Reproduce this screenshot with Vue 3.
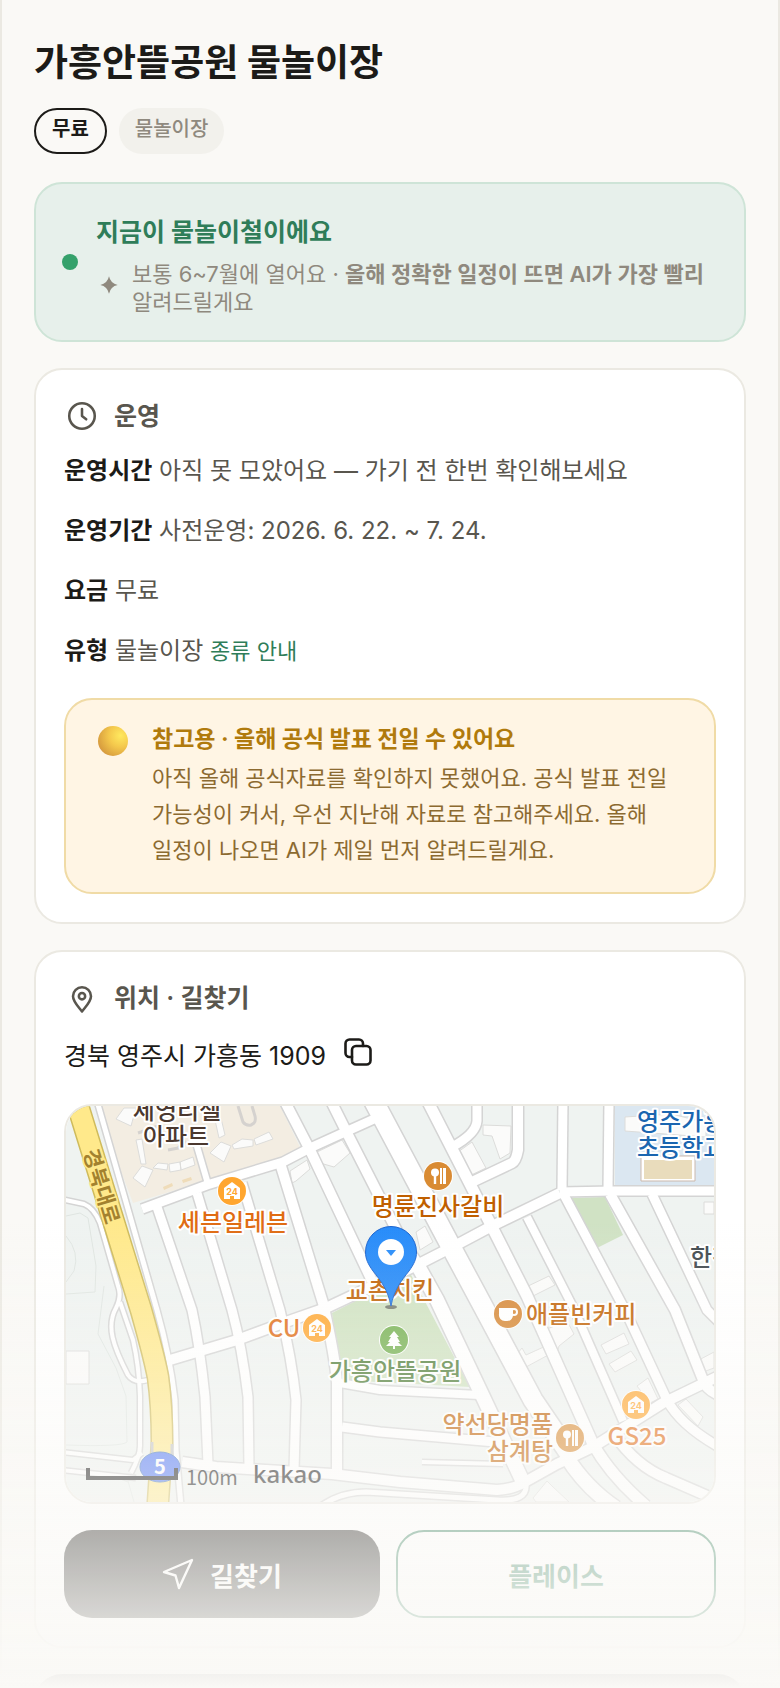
<template>
  <main class="page">
    <header class="place-header">
      <h1>{{ place.name }}</h1>
      <div class="chips">
        <span class="chip chip-free">{{ place.fee }}</span>
        <span class="chip">{{ place.type }}</span>
      </div>
    </header>

    <section class="season-banner">
      <span class="season-dot"></span>
      <div class="season-body">
        <h2>지금이 물놀이철이에요</h2>
        <div class="season-note">
          <svg class="spark-icon" viewBox="0 0 24 24" aria-hidden="true">
            <path d="M12 4Q13.400 10.600 20 12Q13.400 13.400 12 20Q10.600 13.400 4 12Q10.600 10.600 12 4Z" />
          </svg>
          <p>보통 6~7월에 열어요 · <strong>올해 정확한 일정이 뜨면 AI가 가장 빨리</strong> 알려드릴게요</p>
        </div>
      </div>
    </section>

    <section class="card">
      <div class="card-header">
        <svg class="card-icon" viewBox="0 0 24 24" aria-hidden="true">
          <circle cx="12" cy="12" r="8.5" />
          <path d="M12 7.4V12l2.8 2.2" />
        </svg>
        <h2>운영</h2>
      </div>
      <div class="info-rows">
        <p v-for="row in rows" :key="row.label">
          <strong>{{ row.label }}</strong> {{ row.value }}
          <a v-if="row.link" href="#types">{{ row.link }}</a>
        </p>
      </div>
      <div class="notice">
        <span class="notice-ball"></span>
        <div class="notice-body">
          <h3>참고용 · 올해 공식 발표 전일 수 있어요</h3>
          <p>아직 올해 공식자료를 확인하지 못했어요. 공식 발표 전일 가능성이 커서, 우선 지난해 자료로 참고해주세요. 올해 일정이 나오면 AI가 제일 먼저 알려드릴게요.</p>
        </div>
      </div>
    </section>

    <section class="card">
      <div class="card-header">
        <svg class="card-icon" viewBox="0 0 24 24" aria-hidden="true">
          <path d="M12 21C9.5 17.6 6 14.4 6 10.8a6 6 0 0 1 12 0C18 14.4 14.5 17.6 12 21Z" />
          <circle cx="12" cy="10.8" r="2.1" />
        </svg>
        <h2>위치 · 길찾기</h2>
      </div>
      <div class="address">
        <span>{{ place.address }}</span>
        <button class="copy-button" type="button" aria-label="주소 복사" @click="copyAddress">
          <svg viewBox="0 0 28 28" aria-hidden="true">
            <path d="M8 19H5.500a4 4 0 0 1-4-4V5.500a4 4 0 0 1 4-4H15a4 4 0 0 1 4 4V8" />
            <rect x="8" y="8" width="18.500" height="18.500" rx="4" />
          </svg>
        </button>
      </div>

      <div class="map">
        <svg viewBox="0 0 648 396" preserveAspectRatio="xMidYMid slice" role="img" aria-label="지도">
          <rect width="648" height="396" fill="#eff3f1" />
          <path d="M30 0H214L234 41L217 52L67 97Z" fill="#f3ede2" />
          <path d="M549 0H648V80H549Z" fill="#dbe7f1" />
          <path d="M504 92L539 91L557 129L531 142Z" fill="#d0e2c4" />
          <path d="M266 207L344 167L404 281L274 274Z" fill="#cfe2c0" />

          <g class="contour">
            <path d="M0 110L14 107L22 112L30 160L29 186L0 188" />
            <path d="M0 130Q14 146 8 165L0 176" />
            <path d="M38 180L32 228L50 262L60 290L61 336Q56 341 0 339" />
            <path d="M62 375L68 396M52 372L62 376" />
          </g>

          <g class="building">
            <path v-for="d in buildings" :key="d" :d="d" />
          </g>
          <path class="apartment-lane" d="M172 0L177 16Q180 20 185 19L188 17Q190 15 189 10L186 0" />
          <path class="apartment-lane" d="M72 27L92 20M102 44L112 42L120 35" />
          <path d="M97 81l9-4 1 3-9 4ZM116 74l9-3 1 3-9 3Z" fill="#efdcb9" />
          <path d="M575 50H629V75H575Z" fill="#fff" stroke="#cbb9ad" />
          <path d="M578 54H626V73H578Z" fill="#e9dcbc" />

          <g class="road">
            <path
              v-for="road in roads"
              :key="road.d"
              :d="road.d"
              stroke="#d4d4d4"
              :stroke-width="road.w + 3"
            />
            <path
              v-for="road in roads"
              :key="road.d"
              :d="road.d"
              stroke="#fff"
              :stroke-width="road.w"
            />
            <path :d="highway" stroke="#cfbb5c" stroke-width="23" />
            <path :d="highway" stroke="#ffe98b" stroke-width="20" />
            <path d="M86 336V350M106 338V352" stroke="#c2c2c2" stroke-width="3" />
          </g>

          <text class="road-label" x="37" y="80" transform="rotate(73 37 80)">경북대로</text>

          <g v-for="(spot, i) in spots" :key="i" :transform="`translate(${spot.x} ${spot.y})`">
            <circle r="15" fill="#fff" />
            <circle r="14" :fill="spot.color" />
            <g v-if="spot.kind === 'store'">
              <path d="M0-9L8-3V8H2V5H-2V8H-8V-3Z" fill="#fff" />
              <text class="store-text" y="4" :fill="spot.color">24</text>
            </g>
            <g v-else-if="spot.kind === 'food'" fill="#fff">
              <circle cx="-3" cy="-3.500" r="4" />
              <path d="M-4.200-3H-1.800V8H-4.200ZM2-8H4V8H2ZM5-8H8V8H5Z" />
            </g>
            <g v-else-if="spot.kind === 'cafe'">
              <path d="M-9-6H5V0A6 6 0 0 1-1 7H-3A6 6 0 0 1-9 0Z" fill="#fff" />
              <circle cx="6" cy="-2" r="3" fill="none" stroke="#fff" stroke-width="2" />
            </g>
            <path
              v-else
              d="M0-9L5-3H3L6 2H4L8 6H1V9H-1V6H-8L-4 2H-6L-3-3H-5Z"
              fill="#fff"
            />
          </g>

          <text
            v-for="label in labels"
            :key="label.text"
            class="map-label"
            :x="label.x"
            :y="label.y"
            :fill="label.color"
            :text-anchor="label.anchor || 'middle'"
          >{{ label.text }}</text>

          <ellipse cx="94" cy="361" rx="20" ry="15" fill="#4e75f5" stroke="#3d6fc0" />
          <text class="route-number" x="94" y="368">5</text>
          <path d="M22 362V372H110V362" fill="none" stroke="#151515" stroke-width="4" />
          <text class="scale-text" x="120" y="379">100m</text>
          <text class="map-brand" x="187" y="377">kakao</text>

          <defs>
            <linearGradient id="marker" x1="0" y1="0" x2="0" y2="1">
              <stop offset="0" stop-color="#258bfa" />
              <stop offset="1" stop-color="#1f86f8" />
            </linearGradient>
          </defs>
          <ellipse cx="325" cy="201" rx="6" ry="2" fill="#333" opacity=".6" />
          <path
            d="M325 200C322 184 315 175 307 165C302 158 299.500 153 299.500 146A25.500 25.500 0 0 1 350.500 146C350.500 153 348 158 343 165C335 175 328 184 325 200Z"
            fill="url(#marker)"
            stroke="#1862cf"
          />
          <circle cx="325" cy="146" r="13" fill="#fff" />
          <path d="M320 144H330L325 150Z" fill="#258bfa" />
        </svg>
      </div>

      <div class="actions">
        <button class="action-button primary" type="button">
          <svg viewBox="0 0 32 32" aria-hidden="true">
            <path d="M30 2L2 14L13.500 17.500L17 30Z" />
          </svg>
          길찾기
        </button>
        <button class="action-button secondary" type="button">플레이스</button>
      </div>
    </section>

    <section class="next-panel"></section>

    <div class="fade"></div>
  </main>
</template>

<script setup>
const place = {
  name: '가흥안뜰공원 물놀이장',
  fee: '무료',
  type: '물놀이장',
  address: '경북 영주시 가흥동 1909'
};

const rows = [
  { label: '운영시간', value: '아직 못 모았어요 — 가기 전 한번 확인해보세요' },
  { label: '운영기간', value: '사전운영: 2026. 6. 22. ~ 7. 24.' },
  { label: '요금', value: '무료' },
  { label: '유형', value: '물놀이장', link: '종류 안내' }
];

const highway = 'M5 -20L12 0L75 204Q88 250 92 271Q96 300 96 337L91 410';

// Street centre lines, w is the width of the white surface
const roads = [
  { w: 5, d: 'M31 -5L91 204Q104 250 109 294L110 344L115 400' },
  { w: 4, d: 'M-5 93L18 98Q28 102 34 117L52 180Q56 190 50 202C40 220 47 240 62 269Q68 278 82 274' },
  { w: 4, d: 'M54 196L67 234Q73 260 74 290L74 340Q74 350 65 367' },
  { w: 4, d: 'M-5 346L67 354L76 347' },
  { w: 4, d: 'M-5 364L70 372' },
  { w: 9, d: 'M76 103L141 79L217 56L244 42L277 27L317 9' },
  { w: 6, d: 'M128 30L142 78' },
  { w: 9, d: 'M91 101L126 204Q134 241 139 291L142 358' },
  { w: 9, d: 'M131 87L166 204Q176 241 182 291L183 362' },
  { w: 9, d: 'M176 77L214 204Q226 254 230 294L228 364' },
  { w: 10, d: 'M214 57L257 197Q269 250 271 277V368' },
  { w: 10, d: 'M216 -10L244 44L307 177' },
  { w: 10, d: 'M260 -15L281 27L334 131L350 155' },
  { w: 10, d: 'M104 254L171 234L217 217L260 202L347 161L394 137L424 121L494 87' },
  { w: 19, d: 'M305 -10L390 150L419 204L467 294L505 350' },
  { w: 14, d: 'M352 160L371 194L417 291L457 376' },
  { w: 11, d: 'M360 -8L426 121L461 190L527 338Q545 370 580 400' },
  { w: 8, d: 'M461 111L507 201L557 315' },
  { w: 9, d: 'M497 87L559 204L601 294Q615 320 655 342' },
  { w: 10, d: 'M544 88L609 204L637 274Q640 284 655 290' },
  { w: 9, d: 'M586 88L641 204L655 218' },
  { w: 9, d: 'M494 86L547 85H655' },
  { w: 9, d: 'M497 -5L496 84' },
  { w: 9, d: 'M543 -5L542 84' },
  { w: 9, d: 'M411 -5V15Q410 28 386 41' },
  { w: 10, d: 'M452 -5V44Q450 55 446 57L406 76' },
  { w: 8, d: 'M274 277L314 284L413 289' },
  { w: 9, d: 'M276 321L314 326L441 337' },
  { w: 10, d: 'M116 356L150 361L266 368L334 376L431 384Q447 383 457 377L491 358L527 341L597 297L655 269' },
  { w: 10, d: 'M548 328Q570 360 600 372L655 396' },
  { w: 4, d: 'M356 356L437 358' },
  { w: 5, d: 'M255 400Q275 386 300 386L431 394Q462 396 460 378' },
  { w: 14, d: 'M500 350Q520 382 550 402' }
];

const buildings = [
  'M58 2H70L65 20L50 13Z',
  'M70 34L76 33L80 58H75Z',
  'M76 60L87 64L79 81L67 72Z',
  'M87 62L92 57L102 58L101 64ZM103 58L114 56L115 64L104 66ZM114 56L127 51L129 59L115 64Z',
  'M155 36L165 40L158 56L144 47ZM166 39L176 33L187 34L187 40L168 43ZM188 33L203 26L207 33L190 39Z',
  'M149 14L155 12L159 29L153 32Z',
  'M224 65L241 54L244 63L230 75L226 77Z',
  'M251 46L276 34L284 47L268 61L254 57Z',
  'M417 19L445 20L444 47L434 53L426 30L417 29Z',
  'M392 46L406 36L420 62L401 71Z',
  'M350 126L359 120L367 136L354 144Z',
  'M458 182L483 170L489 179L463 192Z',
  'M451 248L456 242L460 249L482 239L486 247L460 261Z',
  'M476 225L501 215L508 228L493 240L490 251Z',
  'M535 239L558 227L563 238L540 248Z',
  'M543 258L565 245L571 254L549 266Z',
  'M571 280L582 272L592 293L584 297Z',
  'M612 299L620 293L637 311L632 320Z',
  'M467 392L481 375L486 380L503 396H470Z',
  'M0 245H23V278H0Z',
  'M559 11L606 8L640 17V31L559 25Z',
  'M638 96H648V108H638Z',
  'M631 255L648 246V262L637 266Z'
];

const spots = [
  { kind: 'store', x: 166, y: 85, color: '#ffa62f' },
  { kind: 'food', x: 372, y: 70, color: '#d98b33' },
  { kind: 'store', x: 251, y: 222, color: '#ffa62f' },
  { kind: 'cafe', x: 442, y: 208, color: '#d68632' },
  { kind: 'park', x: 328, y: 234, color: '#74b04f' },
  { kind: 'food', x: 504, y: 332, color: '#d98b33' },
  { kind: 'store', x: 570, y: 299, color: '#ffa62f' }
];

const labels = [
  { text: '세영리첼', x: 111, y: 13, color: '#4b382e' },
  { text: '아파트', x: 110, y: 39, color: '#4b382e' },
  { text: '세븐일레븐', x: 167, y: 125, color: '#e06b12' },
  { text: '명륜진사갈비', x: 372, y: 109, color: '#c05f00' },
  { text: '교촌치킨', x: 324, y: 193, color: '#c05f00' },
  { text: 'CU', x: 218, y: 231, color: '#e06b12' },
  { text: '애플빈커피', x: 460, y: 217, color: '#c05f00', anchor: 'start' },
  { text: '가흥안뜰공원', x: 329, y: 274, color: '#4c7b34' },
  { text: '약선당명품', x: 487, y: 327, color: '#c05f00', anchor: 'end' },
  { text: '삼계탕', x: 487, y: 354, color: '#c05f00', anchor: 'end' },
  { text: 'GS25', x: 571, y: 339, color: '#e06b12' },
  { text: '영주가흥', x: 571, y: 24, color: '#1b66b0', anchor: 'start' },
  { text: '초등학교', x: 571, y: 50, color: '#1b66b0', anchor: 'start' },
  { text: '한전', x: 624, y: 160, color: '#3f474d', anchor: 'start' }
];

const copyAddress = () => {
  navigator.clipboard?.writeText(place.address);
};
</script>

<style>
body {
  margin: 0;
  background: #faf9f6;
}
</style>

<style scoped>
.page {
  box-sizing: border-box;
  height: 100vh;
  overflow: hidden;
  padding: 39px 32px 0;
  border: solid #ebe9e2;
  border-width: 0 2px;
  background: #faf9f6;
  color: #1c1b18;
  font-family: Inter, "Noto Sans CJK KR", sans-serif;
  font-size: 24px;
  word-break: keep-all;
}

h1, h2, h3, p {
  margin: 0;
}

h1 {
  font-size: 37px;
  line-height: 48px;
  font-weight: 700;
}

.chips {
  display: flex;
  gap: 12px;
  margin-top: 21px;
}

.chip {
  box-sizing: border-box;
  height: 46px;
  padding: 0 16px;
  border-radius: 23px;
  background: #f2f1ec;
  color: #8f897e;
  font-size: 20px;
  line-height: 42px;
  font-weight: 500;
}

.chip-free {
  border: 2px solid #1c1b18;
  background: transparent;
  color: #1c1b18;
  line-height: 38px;
  font-weight: 600;
}

.season-banner {
  display: flex;
  align-items: center;
  gap: 18px;
  margin-top: 28px;
  padding: 24px 26px;
  border: 2px solid #cee4d7;
  border-radius: 28px;
  background: #e7f0eb;
}

.season-dot {
  flex: none;
  width: 16px;
  height: 16px;
  border-radius: 50%;
  background: #35a16b;
}

.season-body h2 {
  margin-bottom: 4px;
  color: #2f7d59;
  font-size: 25px;
  line-height: 48px;
  font-weight: 700;
}

.season-note {
  display: flex;
  gap: 10px;
  color: #8f897e;
  font-size: 22px;
  line-height: 28px;
}

.season-note strong {
  font-weight: 600;
}

.spark-icon {
  flex: none;
  width: 26px;
  height: 50px;
  fill: #8f897e;
}

.card {
  margin-top: 26px;
  padding: 28px;
  border: 2px solid #ebe9e2;
  border-radius: 28px;
  background: #fff;
}

.card-header {
  display: flex;
  align-items: center;
  gap: 14px;
  height: 36px;
  color: #59564e;
}

.card-header h2 {
  font-size: 25px;
  line-height: 36px;
  font-weight: 600;
}

.card-icon {
  width: 36px;
  height: 36px;
  fill: none;
  stroke: currentColor;
  stroke-width: 1.7;
  stroke-linecap: round;
  stroke-linejoin: round;
}

.info-rows {
  display: flex;
  flex-direction: column;
  gap: 20px;
  margin-top: 17px;
  color: #59564e;
  line-height: 40px;
}

.info-rows strong {
  color: #1c1b18;
  font-weight: 700;
}

.info-rows a {
  color: #2f7d59;
  font-size: 22px;
  text-decoration: none;
}

.notice {
  display: flex;
  gap: 24px;
  margin-top: 27px;
  padding: 22px 32px 24px;
  border: 2px solid #f0dba6;
  border-radius: 28px;
  background: #fff5e4;
}

.notice-ball {
  flex: none;
  width: 30px;
  height: 30px;
  margin-top: 4px;
  border-radius: 50%;
  background: radial-gradient(circle at 75% 32%, #ffe95f 0%, #f4c84c 38%, #d99f3f 75%, #d0805a 100%);
}

.notice-body h3 {
  margin-bottom: 4px;
  color: #b07a0c;
  font-size: 23px;
  line-height: 34px;
  font-weight: 700;
}

.notice-body p {
  color: #8c6a30;
  font-size: 22px;
  line-height: 36px;
}

.address {
  display: flex;
  align-items: center;
  gap: 18px;
  margin-top: 20px;
  font-size: 25px;
  line-height: 40px;
}

.copy-button {
  display: flex;
  padding: 0 0 8px;
  border: 0;
  background: none;
  color: inherit;
  cursor: pointer;
}

.copy-button svg {
  width: 28px;
  height: 28px;
  fill: none;
  stroke: currentColor;
  stroke-width: 2.6;
  stroke-linecap: round;
}

.map {
  height: 396px;
  margin-top: 28px;
  overflow: hidden;
  border: 2px solid #ebe9e2;
  border-radius: 28px;
}

.map svg {
  display: block;
  width: 100%;
  height: 100%;
}

.road path {
  fill: none;
  stroke-linejoin: round;
}

.contour path {
  fill: none;
  stroke: #dfe5e1;
}

.building path {
  fill: #fbfbfa;
  stroke: #dcdcda;
}

.apartment-lane {
  fill: none;
  stroke: #d5d2cf;
  stroke-width: 3;
}

.map-label {
  font-family: "Noto Sans CJK KR", sans-serif;
  font-size: 24px;
  font-weight: 500;
  stroke: #fff;
  stroke-width: 4px;
  stroke-linejoin: round;
  paint-order: stroke;
}

.road-label {
  fill: #a3822f;
  font-family: "Noto Sans CJK KR", sans-serif;
  font-size: 21px;
  font-weight: 700;
  stroke: #ffe98b;
  stroke-width: 3px;
  paint-order: stroke;
  text-anchor: middle;
  dominant-baseline: central;
}

.store-text {
  font-size: 9px;
  font-weight: 700;
  text-anchor: middle;
}

.route-number {
  fill: #fff;
  font-family: "Noto Sans CJK KR", sans-serif;
  font-size: 20px;
  font-weight: 700;
  text-anchor: middle;
}

.scale-text {
  fill: #111;
  font-family: "Noto Sans CJK KR", sans-serif;
  font-size: 20px;
  font-weight: 400;
}

.map-brand {
  fill: #111;
  font-family: "Noto Sans", sans-serif;
  font-size: 24px;
  font-weight: 500;
}

.actions {
  display: flex;
  gap: 16px;
  margin-top: 26px;
}

.action-button {
  box-sizing: content-box;
  display: flex;
  flex: 1 1 0;
  align-items: center;
  justify-content: center;
  gap: 16px;
  height: 84px;
  padding: 0;
  border: 2px solid #2f7d59;
  border-radius: 28px;
  background: #fff;
  color: #2f7d59;
  font-family: inherit;
  font-size: 26px;
  font-weight: 700;
  cursor: pointer;
}

.action-button.primary {
  height: 88px;
  border: 0;
  background: #1c1b18;
  color: #fff;
}

.action-button svg {
  width: 32px;
  height: 32px;
  fill: none;
  stroke: currentColor;
  stroke-width: 2.4;
  stroke-linejoin: round;
}

.next-panel {
  height: 88px;
  margin-top: 26px;
  border-radius: 28px;
  background: #1c1b18;
}

.fade {
  position: fixed;
  right: 0;
  bottom: 0;
  left: 0;
  height: 470px;
  background: linear-gradient(rgba(250, 249, 246, 0), #faf9f6);
  pointer-events: none;
}
</style>
